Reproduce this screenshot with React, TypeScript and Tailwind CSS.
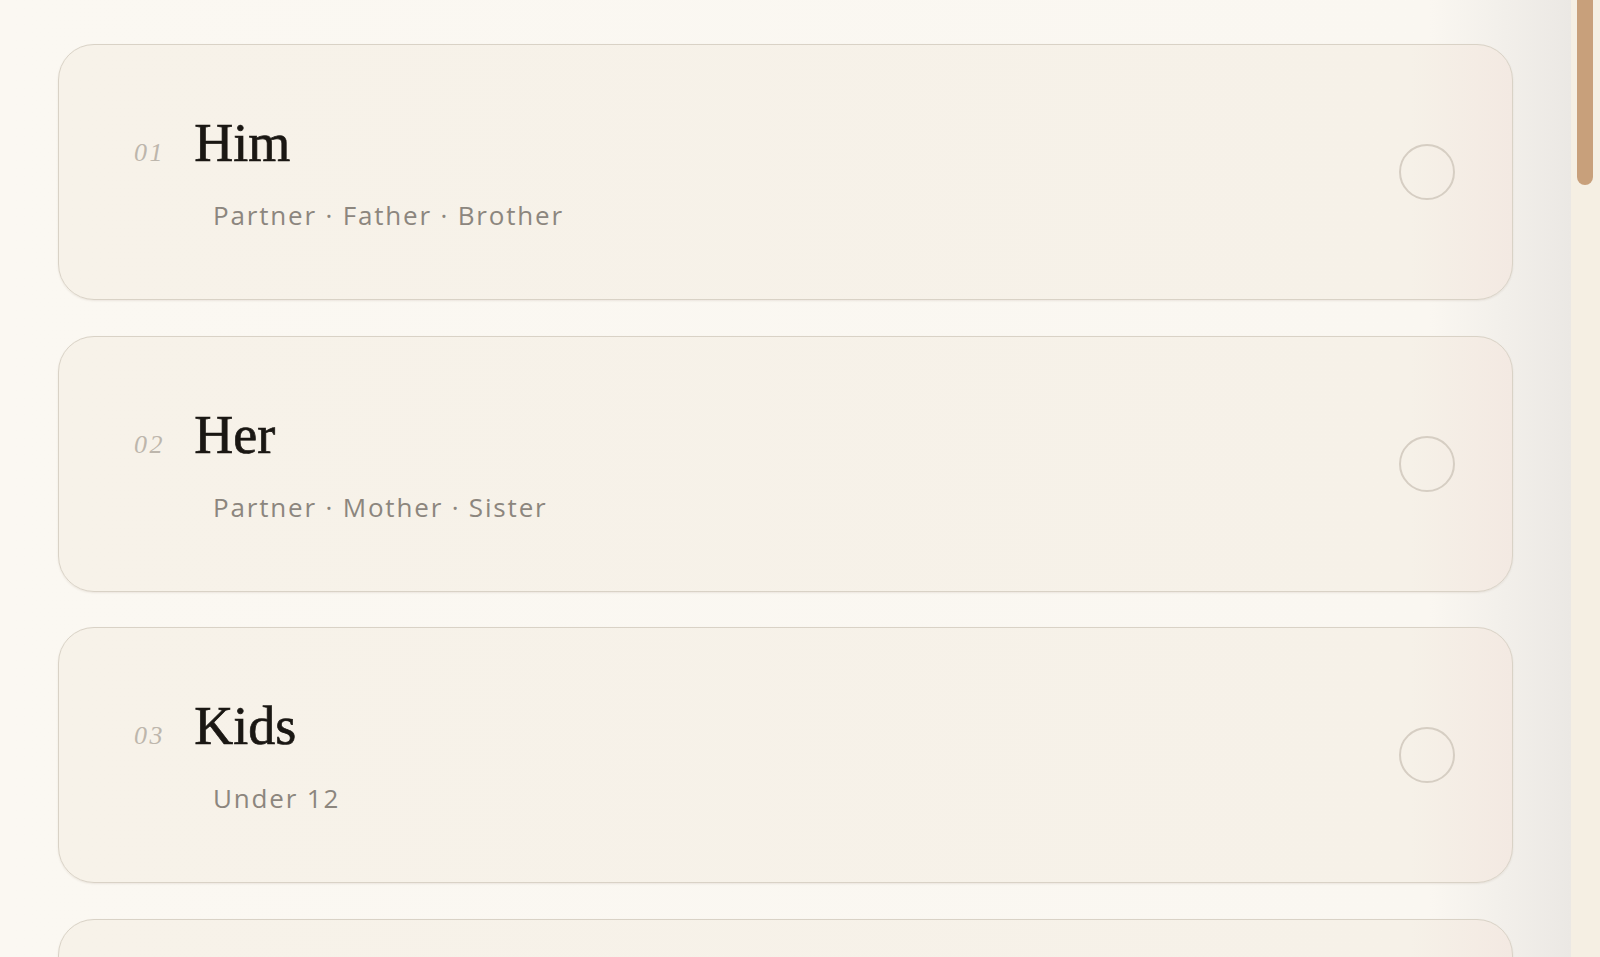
import { useState } from 'react';

interface Audience {
  id: string;
  label: string;
  detail: string[];
}

const audiences: Audience[] = [
  { id: '01', label: 'Him', detail: ['Partner', 'Father', 'Brother'] },
  { id: '02', label: 'Her', detail: ['Partner', 'Mother', 'Sister'] },
  { id: '03', label: 'Kids', detail: ['Under 12'] },
];

const cardClass =
  'flex h-[256px] w-full shrink-0 items-center justify-between rounded-[36px] border-[1.5px] border-[#d9d2c6] bg-[linear-gradient(to_right,#f7f2e9_0%,#f6f1e8_93%,#f3e9e2_100%)] pl-[75px] pr-[57px] text-left shadow-[0_1px_2px_rgba(120,100,80,0.12)]';

function AudienceCard({
  item,
  selected,
  onSelect,
}: {
  item: Audience;
  selected: boolean;
  onSelect: () => void;
}) {
  return (
    <button type="button" onClick={onSelect} className={cardClass}>
      <div className="mt-[4px] flex flex-col">
        <div className="flex items-baseline gap-[29px]">
          <span className="font-['Liberation_Serif',serif] text-[26px] italic leading-none tracking-[0.1em] text-[#bdb6ac]">
            {item.id}
          </span>
          <span className="font-['Liberation_Serif',serif] text-[54px] leading-[54px] text-[#1a1713] [-webkit-text-stroke:0.7px_#1a1713]">
            {item.label}
          </span>
        </div>
        <div className="mt-[28px] pl-[79px] font-['Open_Sans',sans-serif] text-[26px] leading-[34px] tracking-[0.07em] text-[#8c867e]">
          {item.detail.join(' · ')}
        </div>
      </div>
      <span
        className={
          selected
            ? 'h-[56px] w-[56px] shrink-0 rounded-full border-2 border-[#c8a07b] bg-[#c8a07b]'
            : 'h-[56px] w-[56px] shrink-0 rounded-full border-2 border-[#d6cec3]'
        }
      />
    </button>
  );
}

export default function App() {
  const [selectedId, setSelectedId] = useState<string | null>(null);

  return (
    <div className="flex h-screen w-full overflow-hidden bg-[#faf7f1]">
      <main className="flex min-w-0 flex-1 flex-col gap-[35.5px] bg-[linear-gradient(to_right,#fbf8f2_0%,#faf7f1_91%,#ebe8e4_100%)] px-[58px] pt-[44px]">
        {audiences.map((item) => (
          <AudienceCard
            key={item.id}
            item={item}
            selected={selectedId === item.id}
            onSelect={() => setSelectedId(item.id)}
          />
        ))}
        {/* next card only peeks in at the bottom edge */}
        <div className={cardClass} />
      </main>
      <aside className="w-[29px] shrink-0 bg-[#f5efe3] pl-[6px]">
        <div className="h-[185px] w-[16px] rounded-b-full bg-[#c8a07b]" />
      </aside>
    </div>
  );
}
